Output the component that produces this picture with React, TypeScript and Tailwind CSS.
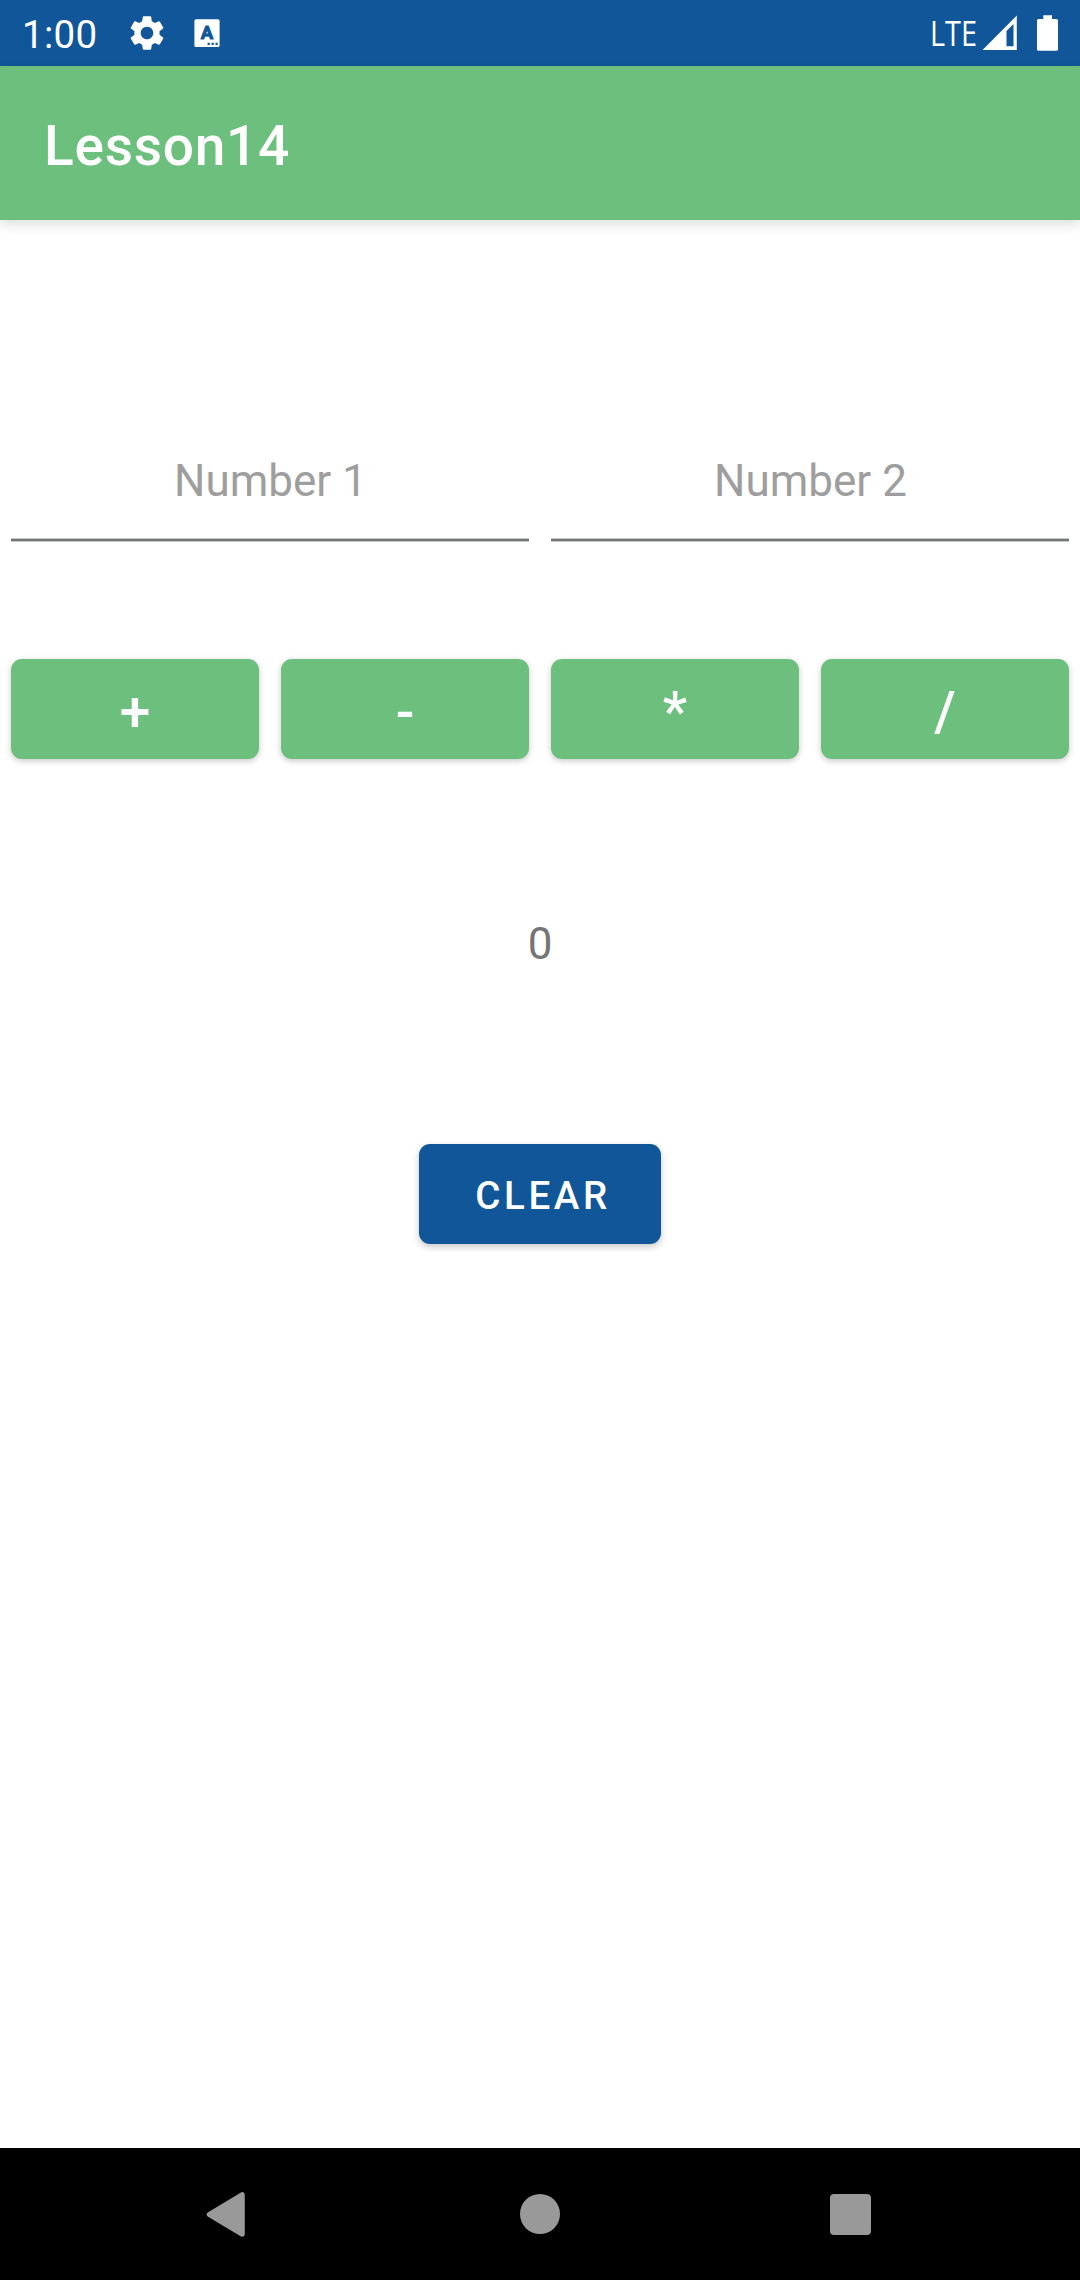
import { useState } from "react";
import { MdSettings } from "react-icons/md";

const OPERATORS = ["+", "-", "*", "/"];

function StatusBar() {
  return (
    <div className="flex h-[66px] items-center bg-[#105698] text-white">
      <span className="ml-[22px] mt-[3px] w-[103.5px] text-[38.5px] leading-[44px] tracking-[0.3px]">1:00</span>
      <MdSettings className="h-[42px] w-[42px]" />
      <svg className="ml-[26.5px] h-7 w-[26px]" viewBox="0 0 26 28">
        <rect x="0.4" y="0.3" width="25.2" height="27.7" rx="1.6" fill="white" />
        <text
          x="12.9"
          y="20.3"
          textAnchor="middle"
          className="fill-[#105698] stroke-[#105698] font-['Roboto'] text-[18.5px] font-bold"
          strokeWidth="0.9"
          strokeLinejoin="round"
        >
          A
        </text>
        <path d="M13.6 23.7h2.2v2.2h-2.2zM17.6 23.7h2.2v2.2h-2.2zM21.500 23.7h2.200v2.200H21.500z" fill="#105698" />
      </svg>
      <div className="ml-auto flex h-[66px] items-center">
        <span className="w-[52px]">
          <span className="inline-block origin-left scale-x-[0.85] font-['Open_Sans',sans-serif] text-[34px] leading-[40px]">
            LTE
          </span>
        </span>
        <svg className="h-[66px] w-[36px]" viewBox="982 0 36 66">
          <path
            d="M982.5 50L1016.8 15.5V50zM1006.5 31V46.3H1013.5V24z"
            fill="white"
            fillRule="evenodd"
          />
        </svg>
        <svg className="ml-[18px] mr-[21px] h-[66px] w-[23px]" viewBox="1036 0 23 66">
          <path
            d="M1043.3 15.3h8.7v3.7h4.5a1.5 1.5 0 0 1 1.5 1.5v28.7a1.5 1.5 0 0 1-1.5 1.5h-18a1.5 1.5 0 0 1-1.5-1.5V20.5a1.5 1.5 0 0 1 1.5-1.5h4.8z"
            fill="white"
          />
        </svg>
      </div>
    </div>
  );
}

function NumberField({ placeholder, value, onChange }: {
  placeholder: string;
  value: string;
  onChange: (v: string) => void;
}) {
  return (
    <div>
      <input
        className="block h-[86px] w-full bg-transparent pb-[29px] pl-px text-center text-[44px] leading-[57px] text-[#212121] outline-none placeholder:text-[#9e9e9e]"
        placeholder={placeholder}
        value={value}
        onChange={(e) => onChange(e.target.value)}
      />
      <div className="h-1 border-y border-[#c6c8c8] bg-[#747676]" />
    </div>
  );
}

function NavigationBar() {
  return (
    <div className="flex h-[132px] items-center bg-black">
      <svg className="ml-[205px] h-[46px] w-[41px]" viewBox="0 0 41 46">
        <path d="M4.5 23.5L37 4V43z" fill="#999" stroke="#999" strokeWidth="5.5" strokeLinejoin="round" />
      </svg>
      <div className="ml-[274px] h-10 w-10 rounded-full bg-[#999]" />
      <div className="ml-[270px] mt-px h-[41px] w-[41px] rounded-[4px] bg-[#999]" />
    </div>
  );
}

export default function App() {
  const [first, setFirst] = useState("");
  const [second, setSecond] = useState("");
  const [result, setResult] = useState("0");

  const calculate = (op: string) => {
    const a = Number(first);
    const b = Number(second);
    const r = op === "+" ? a + b : op === "-" ? a - b : op === "*" ? a * b : a / b;
    setResult(String(r));
  };

  const clear = () => {
    setFirst("");
    setSecond("");
    setResult("0");
  };

  return (
    <div className="flex h-[2280px] w-[1080px] flex-col bg-white font-['Roboto',sans-serif]">
      <StatusBar />
      <header className="flex h-[154px] items-center bg-[#6cbf7d] pl-11 pt-[6px] shadow-[0_4px_12px_rgba(0,0,0,0.14)]">
        <h1 className="text-[55px] font-medium leading-[64px] tracking-[0.75px] text-white">Lesson14</h1>
      </header>
      <main className="flex flex-1 flex-col">
        <div className="mt-[232px] grid grid-cols-2 gap-[22px] px-[11px]">
          <NumberField placeholder="Number 1" value={first} onChange={setFirst} />
          <NumberField placeholder="Number 2" value={second} onChange={setSecond} />
        </div>
        <div className="mt-[117px] flex justify-between px-[11px]">
          {OPERATORS.map((op) => (
            <button
              key={op}
              onClick={() => calculate(op)}
              className="h-[100px] w-[248px] rounded-[11px] bg-[#6cbf7d] pt-[5px] text-[55px] font-medium leading-[64px] text-white shadow-[0_2px_6px_rgba(0,0,0,0.22)]"
            >
              {op}
            </button>
          ))}
        </div>
        <p className="mt-[155px] text-center text-[44px] leading-[60px] text-[#757575]">{result}</p>
        <button
          onClick={clear}
          className="mx-auto mt-[170px] h-[100px] w-[242px] rounded-[11px] bg-[#105698] pl-[6px] pt-[4px] text-[38.5px] font-medium leading-[46px] tracking-[3.6px] text-white shadow-[0_3px_7px_rgba(0,0,0,0.22)]"
        >
          CLEAR
        </button>
      </main>
      <NavigationBar />
    </div>
  );
}
